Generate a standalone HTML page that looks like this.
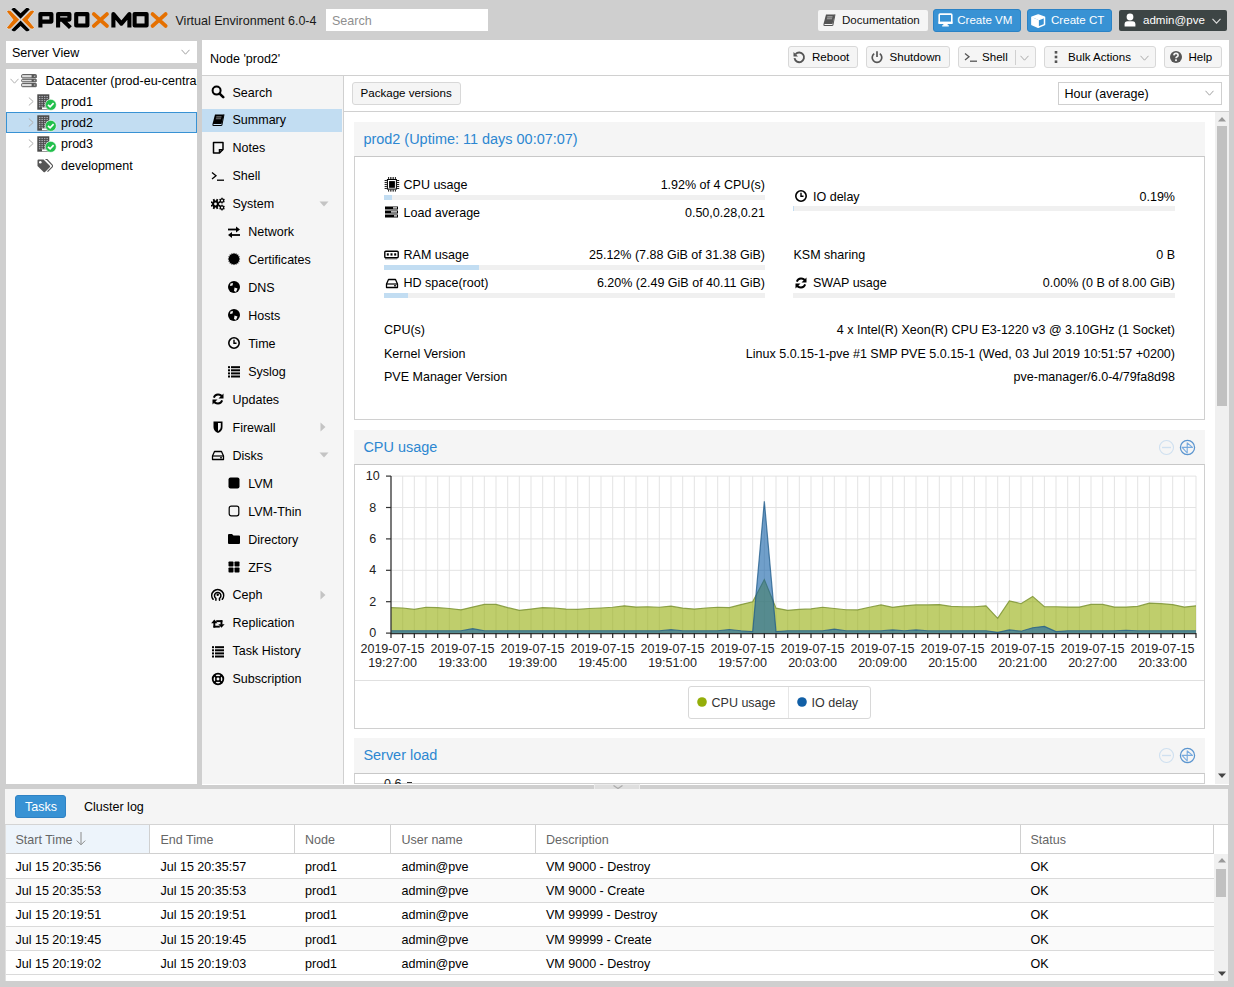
<!DOCTYPE html><html><head><meta charset="utf-8"><title>Proxmox</title><style>
*{box-sizing:border-box;margin:0;padding:0}
html,body{width:1234px;height:987px;overflow:hidden}
body{position:relative;background:#cfcfcf;font-family:"Liberation Sans",sans-serif;font-size:12.53px;color:#000}
.a{position:absolute}
.t{position:absolute;white-space:nowrap;line-height:1}
</style></head><body>
<svg class="a" style="left:0;top:0" width="175" height="40" viewBox="0 0 175 40">
<g stroke-linejoin="round" stroke-width="0.9" stroke="#e8ecef" paint-order="stroke">
<polygon points="6.89,11.53 8.56,10.62 10.53,10.93 19.20,19.74 10.53,28.56 8.56,28.86 6.89,27.80 13.42,19.74" fill="#e57000"/>
<polygon points="34.24,11.53 32.57,10.62 30.60,10.93 21.93,19.74 30.60,28.56 32.57,28.86 34.24,27.80 27.71,19.74" fill="#e57000"/>
<polygon points="11.29,9.26 13.12,7.89 14.94,8.04 20.57,13.21 26.19,8.04 28.01,7.89 29.84,9.26 20.57,18.68" fill="#000"/>
<polygon points="11.29,29.92 13.12,31.29 14.94,31.14 20.57,25.97 26.19,31.14 28.01,31.29 29.84,29.92 20.57,20.50" fill="#000"/>
</g>
<g fill="none" stroke-width="4.1" stroke-linejoin="round">
<path d="M40.4 27.6V14.1H51.4V21.6H40.4" stroke="#000"/>
<path d="M58.1 27.6V14.1H69.4V19.6H58.1M62.6 20L70.4 27.6" stroke="#000"/>
<path d="M76.2 14.1H87.4V25.5H76.2Z" stroke="#000"/>
<path d="M93.9 14.1L106.9 25.9M106.9 14.1L93.9 25.9" stroke="#e57000" stroke-width="3.9" stroke-linecap="round"/>
<path d="M113.4 27.6V14.1L121.4 23.6L129.4 14.1V27.6" stroke="#000"/>
<path d="M134.6 14.1H146.6V25.5H134.6Z" stroke="#000"/>
<path d="M152.6 14.1L165.6 25.9M165.6 14.1L152.6 25.9" stroke="#e57000" stroke-width="3.9" stroke-linecap="round"/>
</g></svg>
<div class="t" style="left:175.5px;top:14.5px;color:#181818">Virtual Environment 6.0-4</div>
<div class="a" style="left:326px;top:9.4px;width:162px;height:21.4px;background:#fff"></div>
<div class="t" style="left:332px;top:15px;color:#8f8f8f">Search</div>
<div class="a" style="left:818px;top:9.6px;width:110px;height:21.3px;background:#f5f5f5;border-radius:2px"></div>
<svg class="a" style="left:822px;top:13px;" width="14" height="14" viewBox="0 0 14 14"><path d="M4 1.5H13L10.5 11H1.5Z" fill="#555"/><path d="M1.5 11Q0.8 13 2.5 13H10.5L11 12H2.8Q2.2 12 2.5 11Z" fill="#555"/><path d="M5.4 3.3H10.6L10.3 4.4H5.1Z" fill="#aaa"/><path d="M5 5.2H10.2L9.9 6.3H4.7Z" fill="#aaa"/><path d="M13 1.5L10.8 12.5" stroke="#555" stroke-width="1"/></svg>
<div class="t" style="left:842px;top:14.5px;color:#111;font-size:11.57px">Documentation</div>
<div class="a" style="left:933px;top:9px;width:88px;height:23px;background:#3892d4;border:1px solid #2b82c5;border-radius:3px"></div>
<svg class="a" style="left:937.5px;top:13px;" width="16" height="14" viewBox="0 0 16 14"><rect x="1.2" y="1.1" width="12.6" height="9.2" rx="0.8" fill="none" stroke="#fff" stroke-width="1.6"/><rect x="0.5" y="8.6" width="14" height="2.4" fill="#fff"/><rect x="5.3" y="10.5" width="4.4" height="2.2" fill="#fff"/><rect x="4.2" y="12.2" width="6.6" height="1.3" fill="#fff"/></svg>
<div class="t" style="left:957.2px;top:14.5px;color:#fff;font-size:11.57px">Create VM</div>
<div class="a" style="left:1027px;top:9px;width:85px;height:23px;background:#3892d4;border:1px solid #2b82c5;border-radius:3px"></div>
<svg class="a" style="left:1030.5px;top:13.5px;" width="15" height="14" viewBox="0 0 15 14"><path d="M7.2 0.9L13.5 3.3V10.6L7.2 13.2L0.9 10.6V3.3Z" fill="none" stroke="#fff" stroke-width="1.5" stroke-linejoin="round"/><path d="M0.9 3.3L7.2 5.8V13.2L0.9 10.6Z" fill="#fff"/><path d="M0.9 3.3L7.2 0.9L13.5 3.3L7.2 5.8Z" fill="#fff"/><path d="M7.2 5.8V13.2M7.2 5.8L13.5 3.3" stroke="#fff" stroke-width="1.3"/></svg>
<div class="t" style="left:1051px;top:14.5px;color:#fff;font-size:11.57px">Create CT</div>
<div class="a" style="left:1119px;top:10px;width:108px;height:21px;background:#3d4545;border-radius:2px"></div>
<svg class="a" style="left:1124px;top:13px;" width="12" height="14" viewBox="0 0 12 14"><circle cx="6" cy="4" r="3.4" fill="#fff"/><path d="M0.6 13.5V11.2Q0.6 8.2 3.5 8.2H8.5Q11.4 8.2 11.4 11.2V13.5Z" fill="#fff"/></svg>
<div class="t" style="left:1143px;top:14.5px;color:#fff;font-size:11.57px">admin@pve</div>
<svg class="a" style="left:1211.5px;top:18px;" width="9" height="6" viewBox="0 0 9 6"><path d="M0.5 0.8L4.5 5.2L8.5 0.8" fill="none" stroke="#ddd" stroke-width="1.1"/></svg>
<div class="a" style="left:6px;top:41px;width:191px;height:22px;background:#fff"></div>
<div class="t" style="left:12px;top:46.5px;">Server View</div>
<svg class="a" style="left:181.0px;top:48.5px;" width="9" height="6" viewBox="0 0 9 6"><path d="M0.5 0.8L4.5 5.2L8.5 0.8" fill="none" stroke="#a0a0a0" stroke-width="1"/></svg>
<div class="a" style="left:6px;top:69px;width:191px;height:715px;background:#fff;overflow:hidden">
<div class="a" style="left:0px;top:43px;width:191px;height:21px;background:#c2ddf2;border:1px solid #3892d4"></div>
</div>
<svg class="a" style="left:10.0px;top:78px;" width="9" height="6" viewBox="0 0 9 6"><path d="M0.5 0.8L4.5 5.2L8.5 0.8" fill="none" stroke="#b0b0b0" stroke-width="1"/></svg>
<svg class="a" style="left:21px;top:74px;" width="16" height="13.5" viewBox="0 0 16 13.5"><rect x="0.6" y="0.6" width="15" height="3.3" rx="1" fill="#ddd" stroke="#555" stroke-width="1"/><rect x="10.6" y="0.6" width="4.2" height="3.3" fill="#555"/><circle cx="13.4" cy="2.25" r="0.7" fill="#bbb"/><rect x="0.6" y="5.3" width="15" height="2.5" rx="1" fill="#ddd" stroke="#555" stroke-width="1"/><rect x="10.6" y="5.3" width="4.2" height="2.5" fill="#555"/><circle cx="13.4" cy="6.55" r="0.7" fill="#bbb"/><rect x="0.6" y="9.4" width="15" height="3.3" rx="1" fill="#ddd" stroke="#555" stroke-width="1"/><rect x="10.6" y="9.4" width="4.2" height="3.3" fill="#555"/><circle cx="13.4" cy="11.05" r="0.7" fill="#bbb"/></svg>
<div class="a" style="left:0;top:0;width:197px;height:100px;overflow:hidden">
<div class="t" style="left:45.6px;top:75px;">Datacenter (prod-eu-central)</div>
</div>
<svg class="a" style="left:27.5px;top:96.7px;" width="6" height="9" viewBox="0 0 6 9"><path d="M0.8 0.5L5.2 4.5L0.8 8.5" fill="none" stroke="#b0b0b0" stroke-width="1"/></svg>
<svg class="a" style="left:37px;top:94px;" width="19.5" height="17" viewBox="0 0 19.5 17"><rect x="0.3" y="0.3" width="12" height="15.4" fill="#4a4a4a"/><rect x="1.9" y="1.9" width="1.5" height="1.2" fill="#a8a8b0"/><rect x="4.4" y="1.9" width="1.5" height="1.2" fill="#a8a8b0"/><rect x="6.9" y="1.9" width="1.5" height="1.2" fill="#a8a8b0"/><rect x="9.4" y="1.9" width="1.5" height="1.2" fill="#a8a8b0"/><rect x="1.9" y="3.9499999999999997" width="1.5" height="1.2" fill="#a8a8b0"/><rect x="4.4" y="3.9499999999999997" width="1.5" height="1.2" fill="#a8a8b0"/><rect x="6.9" y="3.9499999999999997" width="1.5" height="1.2" fill="#a8a8b0"/><rect x="9.4" y="3.9499999999999997" width="1.5" height="1.2" fill="#a8a8b0"/><rect x="1.9" y="6.0" width="1.5" height="1.2" fill="#a8a8b0"/><rect x="4.4" y="6.0" width="1.5" height="1.2" fill="#a8a8b0"/><rect x="6.9" y="6.0" width="1.5" height="1.2" fill="#a8a8b0"/><rect x="9.4" y="6.0" width="1.5" height="1.2" fill="#a8a8b0"/><rect x="1.9" y="8.049999999999999" width="1.5" height="1.2" fill="#a8a8b0"/><rect x="4.4" y="8.049999999999999" width="1.5" height="1.2" fill="#a8a8b0"/><rect x="6.9" y="8.049999999999999" width="1.5" height="1.2" fill="#a8a8b0"/><rect x="9.4" y="8.049999999999999" width="1.5" height="1.2" fill="#a8a8b0"/><rect x="1.9" y="10.1" width="1.5" height="1.2" fill="#a8a8b0"/><rect x="4.4" y="10.1" width="1.5" height="1.2" fill="#a8a8b0"/><rect x="6.9" y="10.1" width="1.5" height="1.2" fill="#a8a8b0"/><rect x="9.4" y="10.1" width="1.5" height="1.2" fill="#a8a8b0"/><rect x="1.9" y="12.15" width="1.5" height="1.2" fill="#a8a8b0"/><rect x="4.4" y="12.15" width="1.5" height="1.2" fill="#a8a8b0"/><rect x="6.9" y="12.15" width="1.5" height="1.2" fill="#a8a8b0"/><rect x="9.4" y="12.15" width="1.5" height="1.2" fill="#a8a8b0"/><rect x="5" y="13.4" width="5" height="1.8" fill="#fff"/><circle cx="13.8" cy="10.8" r="5.5" fill="#21bf4b" stroke="#fff" stroke-width="0.6"/><path d="M11 10.9L13.1 12.9L16.6 9.2" fill="none" stroke="#fff" stroke-width="1.7"/></svg>
<div class="t" style="left:61px;top:96px;">prod1</div>
<svg class="a" style="left:27.5px;top:117.7px;" width="6" height="9" viewBox="0 0 6 9"><path d="M0.8 0.5L5.2 4.5L0.8 8.5" fill="none" stroke="#b0b0b0" stroke-width="1"/></svg>
<svg class="a" style="left:37px;top:115px;" width="19.5" height="17" viewBox="0 0 19.5 17"><rect x="0.3" y="0.3" width="12" height="15.4" fill="#4a4a4a"/><rect x="1.9" y="1.9" width="1.5" height="1.2" fill="#a8a8b0"/><rect x="4.4" y="1.9" width="1.5" height="1.2" fill="#a8a8b0"/><rect x="6.9" y="1.9" width="1.5" height="1.2" fill="#a8a8b0"/><rect x="9.4" y="1.9" width="1.5" height="1.2" fill="#a8a8b0"/><rect x="1.9" y="3.9499999999999997" width="1.5" height="1.2" fill="#a8a8b0"/><rect x="4.4" y="3.9499999999999997" width="1.5" height="1.2" fill="#a8a8b0"/><rect x="6.9" y="3.9499999999999997" width="1.5" height="1.2" fill="#a8a8b0"/><rect x="9.4" y="3.9499999999999997" width="1.5" height="1.2" fill="#a8a8b0"/><rect x="1.9" y="6.0" width="1.5" height="1.2" fill="#a8a8b0"/><rect x="4.4" y="6.0" width="1.5" height="1.2" fill="#a8a8b0"/><rect x="6.9" y="6.0" width="1.5" height="1.2" fill="#a8a8b0"/><rect x="9.4" y="6.0" width="1.5" height="1.2" fill="#a8a8b0"/><rect x="1.9" y="8.049999999999999" width="1.5" height="1.2" fill="#a8a8b0"/><rect x="4.4" y="8.049999999999999" width="1.5" height="1.2" fill="#a8a8b0"/><rect x="6.9" y="8.049999999999999" width="1.5" height="1.2" fill="#a8a8b0"/><rect x="9.4" y="8.049999999999999" width="1.5" height="1.2" fill="#a8a8b0"/><rect x="1.9" y="10.1" width="1.5" height="1.2" fill="#a8a8b0"/><rect x="4.4" y="10.1" width="1.5" height="1.2" fill="#a8a8b0"/><rect x="6.9" y="10.1" width="1.5" height="1.2" fill="#a8a8b0"/><rect x="9.4" y="10.1" width="1.5" height="1.2" fill="#a8a8b0"/><rect x="1.9" y="12.15" width="1.5" height="1.2" fill="#a8a8b0"/><rect x="4.4" y="12.15" width="1.5" height="1.2" fill="#a8a8b0"/><rect x="6.9" y="12.15" width="1.5" height="1.2" fill="#a8a8b0"/><rect x="9.4" y="12.15" width="1.5" height="1.2" fill="#a8a8b0"/><rect x="5" y="13.4" width="5" height="1.8" fill="#fff"/><circle cx="13.8" cy="10.8" r="5.5" fill="#21bf4b" stroke="#fff" stroke-width="0.6"/><path d="M11 10.9L13.1 12.9L16.6 9.2" fill="none" stroke="#fff" stroke-width="1.7"/></svg>
<div class="t" style="left:61px;top:117px;">prod2</div>
<svg class="a" style="left:27.5px;top:138.7px;" width="6" height="9" viewBox="0 0 6 9"><path d="M0.8 0.5L5.2 4.5L0.8 8.5" fill="none" stroke="#b0b0b0" stroke-width="1"/></svg>
<svg class="a" style="left:37px;top:136px;" width="19.5" height="17" viewBox="0 0 19.5 17"><rect x="0.3" y="0.3" width="12" height="15.4" fill="#4a4a4a"/><rect x="1.9" y="1.9" width="1.5" height="1.2" fill="#a8a8b0"/><rect x="4.4" y="1.9" width="1.5" height="1.2" fill="#a8a8b0"/><rect x="6.9" y="1.9" width="1.5" height="1.2" fill="#a8a8b0"/><rect x="9.4" y="1.9" width="1.5" height="1.2" fill="#a8a8b0"/><rect x="1.9" y="3.9499999999999997" width="1.5" height="1.2" fill="#a8a8b0"/><rect x="4.4" y="3.9499999999999997" width="1.5" height="1.2" fill="#a8a8b0"/><rect x="6.9" y="3.9499999999999997" width="1.5" height="1.2" fill="#a8a8b0"/><rect x="9.4" y="3.9499999999999997" width="1.5" height="1.2" fill="#a8a8b0"/><rect x="1.9" y="6.0" width="1.5" height="1.2" fill="#a8a8b0"/><rect x="4.4" y="6.0" width="1.5" height="1.2" fill="#a8a8b0"/><rect x="6.9" y="6.0" width="1.5" height="1.2" fill="#a8a8b0"/><rect x="9.4" y="6.0" width="1.5" height="1.2" fill="#a8a8b0"/><rect x="1.9" y="8.049999999999999" width="1.5" height="1.2" fill="#a8a8b0"/><rect x="4.4" y="8.049999999999999" width="1.5" height="1.2" fill="#a8a8b0"/><rect x="6.9" y="8.049999999999999" width="1.5" height="1.2" fill="#a8a8b0"/><rect x="9.4" y="8.049999999999999" width="1.5" height="1.2" fill="#a8a8b0"/><rect x="1.9" y="10.1" width="1.5" height="1.2" fill="#a8a8b0"/><rect x="4.4" y="10.1" width="1.5" height="1.2" fill="#a8a8b0"/><rect x="6.9" y="10.1" width="1.5" height="1.2" fill="#a8a8b0"/><rect x="9.4" y="10.1" width="1.5" height="1.2" fill="#a8a8b0"/><rect x="1.9" y="12.15" width="1.5" height="1.2" fill="#a8a8b0"/><rect x="4.4" y="12.15" width="1.5" height="1.2" fill="#a8a8b0"/><rect x="6.9" y="12.15" width="1.5" height="1.2" fill="#a8a8b0"/><rect x="9.4" y="12.15" width="1.5" height="1.2" fill="#a8a8b0"/><rect x="5" y="13.4" width="5" height="1.8" fill="#fff"/><circle cx="13.8" cy="10.8" r="5.5" fill="#21bf4b" stroke="#fff" stroke-width="0.6"/><path d="M11 10.9L13.1 12.9L16.6 9.2" fill="none" stroke="#fff" stroke-width="1.7"/></svg>
<div class="t" style="left:61px;top:138px;">prod3</div>
<svg class="a" style="left:37px;top:159px;" width="16" height="14" viewBox="0 0 16 14"><path d="M0.5 1.5Q0.5 0.5 1.5 0.5H6.5L12.8 6.8Q13.5 7.5 12.8 8.2L8 13Q7.3 13.7 6.6 13L0.5 6.9Z" fill="#555"/><circle cx="3.3" cy="3.3" r="1.3" fill="#fff"/><path d="M8.5 0.5H10L15.5 6.3Q16.2 7 15.5 7.7L10.5 12.7" fill="none" stroke="#555" stroke-width="1.2"/></svg>
<div class="t" style="left:61px;top:160px;">development</div>
<div class="a" style="left:202px;top:40px;width:1027px;height:745px;background:#fff"></div>
<div class="t" style="left:210px;top:52.5px;">Node 'prod2'</div>
<div class="a" style="left:202px;top:75px;width:1027px;height:1px;background:#d0d0d0"></div>
<div class="a" style="left:788px;top:46px;width:70px;height:22px;background:#f5f5f5;border:1px solid #d8d8d8;border-radius:3px"></div>
<svg class="a" style="left:792px;top:49.8px;" width="14" height="14" viewBox="0 0 14 14"><path d="M3.6 4.2A4.8 4.8 0 1 1 2.5 8.2" fill="none" stroke="#555" stroke-width="1.9"/><path d="M1.5 2V6.5H6Z" fill="#555"/></svg>
<div class="t" style="left:812px;top:52px;font-size:11.57px">Reboot</div>
<div class="a" style="left:866px;top:46px;width:84px;height:22px;background:#f5f5f5;border:1px solid #d8d8d8;border-radius:3px"></div>
<svg class="a" style="left:870px;top:49.8px;" width="14" height="14" viewBox="0 0 14 14"><path d="M4.2 3.6A4.8 4.8 0 1 0 9.8 3.6" fill="none" stroke="#555" stroke-width="1.7"/><path d="M7 1.2V7" stroke="#555" stroke-width="1.7"/></svg>
<div class="t" style="left:889.5px;top:52px;font-size:11.57px">Shutdown</div>
<div class="a" style="left:958px;top:46px;width:78px;height:22px;background:#f5f5f5;border:1px solid #d8d8d8;border-radius:3px"></div>
<svg class="a" style="left:964px;top:49.8px;" width="14" height="14" viewBox="0 0 14 14"><path d="M1 3.5L5 6.8L1 10" fill="none" stroke="#555" stroke-width="1.3"/><path d="M6 11.2H13" stroke="#555" stroke-width="1.3"/></svg>
<div class="t" style="left:982px;top:52px;font-size:11.57px">Shell</div>
<div class="a" style="left:1014.5px;top:50px;width:1px;height:15px;background:#d0d0d0"></div>
<svg class="a" style="left:1020.0px;top:55px;" width="9" height="6" viewBox="0 0 9 6"><path d="M0.5 0.8L4.5 5.2L8.5 0.8" fill="none" stroke="#aaa" stroke-width="1"/></svg>
<div class="a" style="left:1044px;top:46px;width:112px;height:22px;background:#f5f5f5;border:1px solid #d8d8d8;border-radius:3px"></div>
<svg class="a" style="left:1048.5px;top:49.8px;" width="14" height="14" viewBox="0 0 14 14"><rect x="5.7" y="1" width="2.6" height="2.6" fill="#555"/><rect x="5.7" y="5.7" width="2.6" height="2.6" fill="#555"/><rect x="5.7" y="10.4" width="2.6" height="2.6" fill="#555"/></svg>
<div class="t" style="left:1068px;top:52px;font-size:11.57px">Bulk Actions</div>
<svg class="a" style="left:1139.5px;top:55px;" width="9" height="6" viewBox="0 0 9 6"><path d="M0.5 0.8L4.5 5.2L8.5 0.8" fill="none" stroke="#aaa" stroke-width="1"/></svg>
<div class="a" style="left:1164px;top:46px;width:58px;height:22px;background:#f5f5f5;border:1px solid #d8d8d8;border-radius:3px"></div>
<svg class="a" style="left:1169px;top:49.8px;" width="14" height="14" viewBox="0 0 14 14"><circle cx="7" cy="7" r="6" fill="#555"/><path d="M4.9 5.4Q5 3.4 7 3.4Q9.1 3.4 9.1 5.2Q9.1 6.3 7.8 6.9Q7 7.3 7 8.3" fill="none" stroke="#f5f5f5" stroke-width="1.6"/><rect x="6.1" y="9.3" width="1.8" height="1.8" fill="#f5f5f5"/></svg>
<div class="t" style="left:1188.5px;top:52px;font-size:11.57px">Help</div>
<div class="a" style="left:202px;top:76px;width:142px;height:708px;background:#f5f5f5;border-right:1px solid #d0d0d0"></div>
<div class="a" style="left:202px;top:109px;width:140px;height:23px;background:#c2ddf2"></div>
<div class="t" style="left:232.5px;top:86.5px;">Search</div>
<svg class="a" style="left:211px;top:84.8px;" width="14" height="14" viewBox="0 0 14 14"><circle cx="5.6" cy="5.6" r="4" fill="none" stroke="#000" stroke-width="2"/><path d="M8.6 8.6L12.2 12.2" stroke="#000" stroke-width="2.6" stroke-linecap="round"/></svg>
<div class="t" style="left:232.5px;top:114.4px;">Summary</div>
<svg class="a" style="left:211px;top:112.74px;" width="14" height="14" viewBox="0 0 14 14"><path d="M4 1.5H13L10.5 11H1.5Z" fill="#000"/><path d="M1.5 11Q0.8 13 2.5 13H10.5L11 12H2.8Q2.2 12 2.5 11Z" fill="#000"/><path d="M5.4 3.3H10.6L10.3 4.4H5.1Z" fill="#777"/><path d="M5 5.2H10.2L9.9 6.3H4.7Z" fill="#777"/><path d="M13 1.5L10.8 12.5" stroke="#000" stroke-width="1"/></svg>
<div class="t" style="left:232.5px;top:142.4px;">Notes</div>
<svg class="a" style="left:211px;top:140.7px;" width="14" height="14" viewBox="0 0 14 14"><path d="M2.5 1.5H12V8.5L8.5 12H2.5Z" fill="none" stroke="#000" stroke-width="1.5" stroke-linejoin="round"/><path d="M8.5 12V8.8H12" fill="none" stroke="#000" stroke-width="1.5"/></svg>
<div class="t" style="left:232.5px;top:170.3px;">Shell</div>
<svg class="a" style="left:211px;top:168.6px;" width="14" height="14" viewBox="0 0 14 14"><path d="M1 3.5L5 6.8L1 10" fill="none" stroke="#000" stroke-width="1.3"/><path d="M6 11.2H13" stroke="#000" stroke-width="1.3"/></svg>
<div class="t" style="left:232.5px;top:198.3px;">System</div>
<svg class="a" style="left:211px;top:196.6px;" width="14" height="14" viewBox="0 0 14 14"><rect x="3.6" y="1.8" width="1.8" height="2" transform="rotate(22.5 4.5 7)" fill="#000"/><rect x="3.6" y="1.8" width="1.8" height="2" transform="rotate(67.5 4.5 7)" fill="#000"/><rect x="3.6" y="1.8" width="1.8" height="2" transform="rotate(112.5 4.5 7)" fill="#000"/><rect x="3.6" y="1.8" width="1.8" height="2" transform="rotate(157.5 4.5 7)" fill="#000"/><rect x="3.6" y="1.8" width="1.8" height="2" transform="rotate(202.5 4.5 7)" fill="#000"/><rect x="3.6" y="1.8" width="1.8" height="2" transform="rotate(247.5 4.5 7)" fill="#000"/><rect x="3.6" y="1.8" width="1.8" height="2" transform="rotate(292.5 4.5 7)" fill="#000"/><rect x="3.6" y="1.8" width="1.8" height="2" transform="rotate(337.5 4.5 7)" fill="#000"/><circle cx="4.5" cy="7" r="3.5" fill="#000"/><circle cx="4.5" cy="7" r="1.4" fill="#f5f5f5"/><rect x="10.4" y="0.7000000000000002" width="1.2" height="1.2" transform="rotate(0 11 3.6)" fill="#000"/><rect x="10.4" y="0.7000000000000002" width="1.2" height="1.2" transform="rotate(60 11 3.6)" fill="#000"/><rect x="10.4" y="0.7000000000000002" width="1.2" height="1.2" transform="rotate(120 11 3.6)" fill="#000"/><rect x="10.4" y="0.7000000000000002" width="1.2" height="1.2" transform="rotate(180 11 3.6)" fill="#000"/><rect x="10.4" y="0.7000000000000002" width="1.2" height="1.2" transform="rotate(240 11 3.6)" fill="#000"/><rect x="10.4" y="0.7000000000000002" width="1.2" height="1.2" transform="rotate(300 11 3.6)" fill="#000"/><circle cx="11" cy="3.6" r="1.7" fill="none" stroke="#000" stroke-width="1.3"/><rect x="10.4" y="7.699999999999999" width="1.2" height="1.2" transform="rotate(0 11 10.6)" fill="#000"/><rect x="10.4" y="7.699999999999999" width="1.2" height="1.2" transform="rotate(60 11 10.6)" fill="#000"/><rect x="10.4" y="7.699999999999999" width="1.2" height="1.2" transform="rotate(120 11 10.6)" fill="#000"/><rect x="10.4" y="7.699999999999999" width="1.2" height="1.2" transform="rotate(180 11 10.6)" fill="#000"/><rect x="10.4" y="7.699999999999999" width="1.2" height="1.2" transform="rotate(240 11 10.6)" fill="#000"/><rect x="10.4" y="7.699999999999999" width="1.2" height="1.2" transform="rotate(300 11 10.6)" fill="#000"/><circle cx="11" cy="10.6" r="1.7" fill="none" stroke="#000" stroke-width="1.3"/></svg>
<div class="t" style="left:248.2px;top:226.2px;">Network</div>
<svg class="a" style="left:227px;top:224.5px;" width="14" height="14" viewBox="0 0 14 14"><path d="M1 4.5H10" stroke="#000" stroke-width="1.8"/><path d="M9 1.5L13 4.5L9 7.5Z" fill="#000"/><path d="M4 10H13" stroke="#000" stroke-width="1.8"/><path d="M5 7L1 10L5 13Z" fill="#000"/></svg>
<div class="t" style="left:248.2px;top:254.1px;">Certificates</div>
<svg class="a" style="left:227px;top:252.39999999999998px;" width="14" height="14" viewBox="0 0 14 14"><polygon points="13.30,7.00 11.90,7.98 12.82,9.41 11.16,9.78 11.45,11.45 9.78,11.16 9.41,12.82 7.98,11.90 7.00,13.30 6.02,11.90 4.59,12.82 4.22,11.16 2.55,11.45 2.84,9.78 1.18,9.41 2.10,7.98 0.70,7.00 2.10,6.02 1.18,4.59 2.84,4.22 2.55,2.55 4.22,2.84 4.59,1.18 6.02,2.10 7.00,0.70 7.98,2.10 9.41,1.18 9.78,2.84 11.45,2.55 11.16,4.22 12.82,4.59 11.90,6.02" fill="#000"/></svg>
<div class="t" style="left:248.2px;top:282.1px;">DNS</div>
<svg class="a" style="left:227px;top:280.4px;" width="14" height="14" viewBox="0 0 14 14"><circle cx="7" cy="7" r="6" fill="#000"/><path d="M7.5 7.5L10.5 8.5L9 12L7 11Z" fill="#f5f5f5"/><path d="M3.5 3.5L6 3L5.5 5.5L3 6Z" fill="#f5f5f5"/></svg>
<div class="t" style="left:248.2px;top:310.0px;">Hosts</div>
<svg class="a" style="left:227px;top:308.3px;" width="14" height="14" viewBox="0 0 14 14"><circle cx="7" cy="7" r="6" fill="#000"/><path d="M7.5 7.5L10.5 8.5L9 12L7 11Z" fill="#f5f5f5"/><path d="M3.5 3.5L6 3L5.5 5.5L3 6Z" fill="#f5f5f5"/></svg>
<div class="t" style="left:248.2px;top:338.0px;">Time</div>
<svg class="a" style="left:227px;top:336.3px;" width="14" height="14" viewBox="0 0 14 14"><circle cx="7" cy="7" r="5.2" fill="none" stroke="#000" stroke-width="1.6"/><path d="M7 3.8V7.2H9.5" fill="none" stroke="#000" stroke-width="1.4"/></svg>
<div class="t" style="left:248.2px;top:365.9px;">Syslog</div>
<svg class="a" style="left:227px;top:364.2px;" width="14" height="14" viewBox="0 0 14 14"><rect x="1" y="2.2" width="2" height="2" fill="#000"/><rect x="4" y="2.2" width="9" height="2" fill="#000"/><rect x="1" y="5.300000000000001" width="2" height="2" fill="#000"/><rect x="4" y="5.300000000000001" width="9" height="2" fill="#000"/><rect x="1" y="8.4" width="2" height="2" fill="#000"/><rect x="4" y="8.4" width="9" height="2" fill="#000"/><rect x="1" y="11.5" width="2" height="2" fill="#000"/><rect x="4" y="11.5" width="9" height="2" fill="#000"/></svg>
<div class="t" style="left:232.5px;top:393.8px;">Updates</div>
<svg class="a" style="left:211px;top:392.1px;" width="14" height="14" viewBox="0 0 14 14"><path d="M11.3 5.2A4.6 4.6 0 0 0 2.8 5.6" fill="none" stroke="#000" stroke-width="1.9"/><path d="M12.5 1.5V6.5H7.5Z" fill="#000"/><path d="M2.7 8.8A4.6 4.6 0 0 0 11.2 8.4" fill="none" stroke="#000" stroke-width="1.9"/><path d="M1.5 12.5V7.5H6.5Z" fill="#000"/></svg>
<div class="t" style="left:232.5px;top:421.8px;">Firewall</div>
<svg class="a" style="left:211px;top:420.1px;" width="14" height="14" viewBox="0 0 14 14"><path d="M2.5 1.5H11.5V7Q11.5 11 7 13Q2.5 11 2.5 7Z" fill="#000"/><path d="M7 3V11.2Q9.8 9.8 9.8 7V3Z" fill="#f5f5f5"/></svg>
<div class="t" style="left:232.5px;top:449.7px;">Disks</div>
<svg class="a" style="left:211px;top:448.0px;" width="14" height="14" viewBox="0 0 14 14"><path d="M1.5 8L3.5 3.5H10.5L12.5 8V11.5H1.5Z" fill="none" stroke="#000" stroke-width="1.3" stroke-linejoin="round"/><path d="M1.5 8H12.5" stroke="#000" stroke-width="1.2"/><rect x="9" y="9.2" width="2" height="1.2" fill="#000"/></svg>
<div class="t" style="left:248.2px;top:477.7px;">LVM</div>
<svg class="a" style="left:227px;top:476.0px;" width="14" height="14" viewBox="0 0 14 14"><rect x="1.5" y="1.5" width="11" height="11" rx="2" fill="#000"/></svg>
<div class="t" style="left:248.2px;top:505.6px;">LVM-Thin</div>
<svg class="a" style="left:227px;top:503.9px;" width="14" height="14" viewBox="0 0 14 14"><rect x="2.2" y="2.2" width="9.6" height="9.6" rx="2" fill="none" stroke="#000" stroke-width="1.2"/></svg>
<div class="t" style="left:248.2px;top:533.5px;">Directory</div>
<svg class="a" style="left:227px;top:531.8px;" width="14" height="14" viewBox="0 0 14 14"><path d="M1 3Q1 2 2 2H5L6.5 3.5H12Q13 3.5 13 4.5V11Q13 12 12 12H2Q1 12 1 11Z" fill="#000"/></svg>
<div class="t" style="left:248.2px;top:561.5px;">ZFS</div>
<svg class="a" style="left:227px;top:559.8px;" width="14" height="14" viewBox="0 0 14 14"><rect x="1.5" y="1.5" width="5" height="5" rx="0.8" fill="#000"/><rect x="7.5" y="1.5" width="5" height="5" rx="0.8" fill="#000"/><rect x="1.5" y="7.5" width="5" height="5" rx="0.8" fill="#000"/><rect x="7.5" y="7.5" width="5" height="5" rx="0.8" fill="#000"/></svg>
<div class="t" style="left:232.5px;top:589.4px;">Ceph</div>
<svg class="a" style="left:211px;top:587.7px;" width="14" height="14" viewBox="0 0 14 14"><path d="M2.1 11.2A5.9 5.9 0 1 1 11.3 11.2" fill="none" stroke="#000" stroke-width="1.6" stroke-linecap="round"/><path d="M4.9 12.2V10.3A3.2 3.2 0 1 1 8.5 10.3V12.2" fill="none" stroke="#000" stroke-width="1.5" stroke-linecap="round"/><circle cx="6.7" cy="6.8" r="1.2" fill="#000"/></svg>
<div class="t" style="left:232.5px;top:617.4px;">Replication</div>
<svg class="a" style="left:211px;top:615.7px;" width="14" height="14" viewBox="0 0 14 14"><rect x="2.4" y="6.5" width="1.9" height="5.1" fill="#000"/><rect x="2.4" y="9.7" width="6.4" height="1.9" fill="#000"/><rect x="5.2" y="4.2" width="6.2" height="1.9" fill="#000"/><rect x="9.5" y="4.2" width="1.9" height="4.6" fill="#000"/><path d="M0.2 7.2L3.35 3.6L6.5 7.2Z" fill="#000"/><path d="M7.3 8.2L10.45 11.8L13.6 8.2Z" fill="#000"/></svg>
<div class="t" style="left:232.5px;top:645.3px;">Task History</div>
<svg class="a" style="left:211px;top:643.6px;" width="14" height="14" viewBox="0 0 14 14"><rect x="1" y="2.2" width="2" height="2" fill="#000"/><rect x="4" y="2.2" width="9" height="2" fill="#000"/><rect x="1" y="5.300000000000001" width="2" height="2" fill="#000"/><rect x="4" y="5.300000000000001" width="9" height="2" fill="#000"/><rect x="1" y="8.4" width="2" height="2" fill="#000"/><rect x="4" y="8.4" width="9" height="2" fill="#000"/><rect x="1" y="11.5" width="2" height="2" fill="#000"/><rect x="4" y="11.5" width="9" height="2" fill="#000"/></svg>
<div class="t" style="left:232.5px;top:673.2px;">Subscription</div>
<svg class="a" style="left:211px;top:671.5px;" width="14" height="14" viewBox="0 0 14 14"><circle cx="7" cy="7" r="5.3" fill="none" stroke="#000" stroke-width="1.8"/><circle cx="7" cy="7" r="2.2" fill="none" stroke="#000" stroke-width="1.5"/><path d="M3.2 3.2L5.4 5.4M10.8 3.2L8.6 5.4M3.2 10.8L5.4 8.6M10.8 10.8L8.6 8.6" stroke="#000" stroke-width="2"/></svg>
<svg class="a" style="left:319px;top:200.56px;" width="10" height="6" viewBox="0 0 10 6"><path d="M0.5 0.5H9.5L5 5.5Z" fill="#c4c4c4"/></svg>
<svg class="a" style="left:320px;top:422.08000000000004px;" width="6" height="10" viewBox="0 0 6 10"><path d="M0.5 0.5V9.5L5.5 5Z" fill="#c4c4c4"/></svg>
<svg class="a" style="left:319px;top:452.02000000000004px;" width="10" height="6" viewBox="0 0 10 6"><path d="M0.5 0.5H9.5L5 5.5Z" fill="#c4c4c4"/></svg>
<svg class="a" style="left:320px;top:589.72px;" width="6" height="10" viewBox="0 0 6 10"><path d="M0.5 0.5V9.5L5.5 5Z" fill="#c4c4c4"/></svg>
<div class="a" style="left:352px;top:82px;width:109px;height:23px;background:#f5f5f5;border:1px solid #d8d8d8;border-radius:3px"></div>
<div class="t" style="left:360.5px;top:87.6px;font-size:11.57px">Package versions</div>
<div class="a" style="left:1058px;top:82px;width:164px;height:23px;background:#fff;border:1px solid #cfcfcf"></div>
<div class="t" style="left:1064.5px;top:88px;">Hour (average)</div>
<svg class="a" style="left:1205.3px;top:90px;" width="9" height="6" viewBox="0 0 9 6"><path d="M0.5 0.8L4.5 5.2L8.5 0.8" fill="none" stroke="#a0a0a0" stroke-width="1"/></svg>
<div class="a" style="left:344px;top:111px;width:885px;height:1px;background:#d0d0d0"></div>
<div class="a" style="left:354px;top:122px;width:851px;height:34px;background:#f5f5f5"></div>
<div class="t" style="left:363.4px;top:132px;font-size:14.46px;color:#2c87d1">prod2 (Uptime: 11 days 00:07:07)</div>
<div class="a" style="left:354px;top:156px;width:851px;height:264px;border:1px solid #d0d0d0;border-top:1px solid #c8c8c8;background:#fff"></div>
<div class="a" style="left:354px;top:430px;width:851px;height:34px;background:#f5f5f5"></div>
<div class="t" style="left:363.4px;top:440px;font-size:14.46px;color:#2c87d1">CPU usage</div>
<div class="a" style="left:354px;top:464px;width:851px;height:265px;border:1px solid #d0d0d0;border-top:1px solid #c8c8c8;background:#fff"></div>
<svg class="a" style="left:1158px;top:438.5px;" width="17" height="17" viewBox="0 0 17 17"><circle cx="8.5" cy="8.5" r="7" fill="none" stroke="#cfe0f0" stroke-width="1.1"/><path d="M4 8.5H13" stroke="#cfe0f0" stroke-width="1.4"/></svg>
<svg class="a" style="left:1179.3px;top:438.5px;" width="17" height="17" viewBox="0 0 17 17"><circle cx="8.5" cy="8.5" r="7.1" fill="none" stroke="#5b95cf" stroke-width="1.25"/><path d="M8.2 3.8L13.5 8.4H3.1L8.2 14Z" fill="none" stroke="#78abdf" stroke-width="1.1" stroke-linejoin="round"/></svg>
<div class="a" style="left:354px;top:738px;width:851px;height:35px;background:#f5f5f5"></div>
<div class="t" style="left:363.4px;top:748px;font-size:14.46px;color:#2c87d1">Server load</div>
<div class="a" style="left:354px;top:773px;width:851px;height:11px;border:1px solid #d0d0d0;border-top:1px solid #c8c8c8;background:#fff"></div>
<svg class="a" style="left:1158px;top:746.5px;" width="17" height="17" viewBox="0 0 17 17"><circle cx="8.5" cy="8.5" r="7" fill="none" stroke="#cfe0f0" stroke-width="1.1"/><path d="M4 8.5H13" stroke="#cfe0f0" stroke-width="1.4"/></svg>
<svg class="a" style="left:1179.3px;top:746.5px;" width="17" height="17" viewBox="0 0 17 17"><circle cx="8.5" cy="8.5" r="7.1" fill="none" stroke="#5b95cf" stroke-width="1.25"/><path d="M8.2 3.8L13.5 8.4H3.1L8.2 14Z" fill="none" stroke="#78abdf" stroke-width="1.1" stroke-linejoin="round"/></svg>
<svg class="a" style="left:384px;top:176px;" width="16" height="16" viewBox="0 0 16 16"><rect x="2.9" y="3" width="10" height="10.6" fill="#000"/><rect x="3.9" y="4" width="8" height="8.6" fill="#fff"/><rect x="5.1" y="5.1" width="5.8" height="6.7" fill="#000"/><rect x="0.6" y="4.05" width="2.3" height="0.9" fill="#000"/><rect x="12.9" y="4.05" width="2.3" height="0.9" fill="#000"/><rect x="0.6" y="5.95" width="2.3" height="0.9" fill="#000"/><rect x="12.9" y="5.95" width="2.3" height="0.9" fill="#000"/><rect x="0.6" y="7.95" width="2.3" height="0.9" fill="#000"/><rect x="12.9" y="7.95" width="2.3" height="0.9" fill="#000"/><rect x="0.6" y="9.950000000000001" width="2.3" height="0.9" fill="#000"/><rect x="12.9" y="9.950000000000001" width="2.3" height="0.9" fill="#000"/><rect x="0.6" y="11.950000000000001" width="2.3" height="0.9" fill="#000"/><rect x="12.9" y="11.950000000000001" width="2.3" height="0.9" fill="#000"/><rect x="4.199999999999999" y="1" width="0.8" height="2" fill="#000"/><rect x="4.199999999999999" y="13.6" width="0.8" height="2" fill="#000"/><rect x="5.8999999999999995" y="1" width="0.8" height="2" fill="#000"/><rect x="5.8999999999999995" y="13.6" width="0.8" height="2" fill="#000"/><rect x="7.6" y="1" width="0.8" height="2" fill="#000"/><rect x="7.6" y="13.6" width="0.8" height="2" fill="#000"/><rect x="9.299999999999999" y="1" width="0.8" height="2" fill="#000"/><rect x="9.299999999999999" y="13.6" width="0.8" height="2" fill="#000"/><rect x="11.0" y="1" width="0.8" height="2" fill="#000"/><rect x="11.0" y="13.6" width="0.8" height="2" fill="#000"/></svg>
<div class="t" style="left:403.5px;top:178.5px;">CPU usage</div>
<div class="t" style="right:469px;top:178.5px;">1.92% of 4 CPU(s)</div>
<div class="a" style="left:384px;top:195px;width:381px;height:5px;background:#f0f0f0"></div>
<div class="a" style="left:384px;top:195px;width:7.5px;height:5px;background:#c2ddf2"></div>
<svg class="a" style="left:385px;top:206px;" width="14" height="12" viewBox="0 0 14 12"><rect x="0" y="0.5" width="13" height="3" fill="#000"/><rect x="0" y="4.5" width="13" height="3" fill="#000"/><rect x="0" y="8.5" width="13" height="3" fill="#000"/><rect x="8" y="1.3" width="4" height="1.2" fill="#fff"/><rect x="6" y="5.3" width="6" height="1.2" fill="#fff"/><rect x="9" y="9.3" width="3" height="1.2" fill="#fff"/></svg>
<div class="t" style="left:403.5px;top:206.5px;">Load average</div>
<div class="t" style="right:469px;top:206.5px;">0.50,0.28,0.21</div>
<svg class="a" style="left:384px;top:249px;" width="15" height="12" viewBox="0 0 15 12"><rect x="0.8" y="2.3" width="13.4" height="6.5" rx="1" fill="none" stroke="#000" stroke-width="1.4"/><rect x="2.8" y="4.3" width="2" height="2.3" fill="#000"/><rect x="6.5" y="4.3" width="2" height="2.3" fill="#000"/><rect x="10.2" y="4.3" width="2" height="2.3" fill="#000"/><path d="M2 9.5V10.5M4 9.5V10.5M6 9.5V10.5M8 9.5V10.5M10 9.5V10.5M12 9.5V10.5" stroke="#000" stroke-width="0.8"/></svg>
<div class="t" style="left:403.5px;top:249px;">RAM usage</div>
<div class="t" style="right:469px;top:249px;">25.12% (7.88 GiB of 31.38 GiB)</div>
<div class="a" style="left:384px;top:265px;width:381px;height:5px;background:#f0f0f0"></div>
<div class="a" style="left:384px;top:265px;width:95px;height:5px;background:#c2ddf2"></div>
<svg class="a" style="left:385px;top:276px;" width="14" height="14" viewBox="0 0 14 14"><path d="M1.5 8L3.5 3.5H10.5L12.5 8V11.5H1.5Z" fill="none" stroke="#000" stroke-width="1.3" stroke-linejoin="round"/><path d="M1.5 8H12.5" stroke="#000" stroke-width="1.2"/><rect x="9" y="9.2" width="2" height="1.2" fill="#000"/></svg>
<div class="t" style="left:403.5px;top:277px;">HD space(root)</div>
<div class="t" style="right:469px;top:277px;">6.20% (2.49 GiB of 40.11 GiB)</div>
<div class="a" style="left:384px;top:293px;width:381px;height:5px;background:#f0f0f0"></div>
<div class="a" style="left:384px;top:293px;width:24px;height:5px;background:#c2ddf2"></div>
<svg class="a" style="left:794px;top:189px;" width="14" height="14" viewBox="0 0 14 14"><circle cx="7" cy="7" r="5.2" fill="none" stroke="#000" stroke-width="1.6"/><path d="M7 3.8V7.2H9.5" fill="none" stroke="#000" stroke-width="1.4"/></svg>
<div class="t" style="left:813px;top:190.5px;">IO delay</div>
<div class="t" style="right:59px;top:190.5px;">0.19%</div>
<div class="a" style="left:793px;top:206px;width:382px;height:5px;background:#f0f0f0"></div>
<div class="a" style="left:793px;top:206px;width:1px;height:5px;background:#c2ddf2"></div>
<div class="t" style="left:793.5px;top:249px;">KSM sharing</div>
<div class="t" style="right:59px;top:249px;">0 B</div>
<svg class="a" style="left:794px;top:276px;" width="14" height="14" viewBox="0 0 14 14"><path d="M11.3 5.2A4.6 4.6 0 0 0 2.8 5.6" fill="none" stroke="#000" stroke-width="1.9"/><path d="M12.5 1.5V6.5H7.5Z" fill="#000"/><path d="M2.7 8.8A4.6 4.6 0 0 0 11.2 8.4" fill="none" stroke="#000" stroke-width="1.9"/><path d="M1.5 12.5V7.5H6.5Z" fill="#000"/></svg>
<div class="t" style="left:813px;top:277px;">SWAP usage</div>
<div class="t" style="right:59px;top:277px;">0.00% (0 B of 8.00 GiB)</div>
<div class="a" style="left:793px;top:293px;width:382px;height:5px;background:#f0f0f0"></div>
<div class="t" style="left:384px;top:324px;">CPU(s)</div>
<div class="t" style="right:59px;top:324px;">4 x Intel(R) Xeon(R) CPU E3-1220 v3 @ 3.10GHz (1 Socket)</div>
<div class="t" style="left:384px;top:347.5px;">Kernel Version</div>
<div class="t" style="right:59px;top:347.5px;">Linux 5.0.15-1-pve #1 SMP PVE 5.0.15-1 (Wed, 03 Jul 2019 10:51:57 +0200)</div>
<div class="t" style="left:384px;top:370.5px;">PVE Manager Version</div>
<div class="t" style="right:59px;top:370.5px;">pve-manager/6.0-4/79fa8d98</div>
<svg class="a" style="left:0;top:0" width="1234" height="987"><path d="M391.0 633.1H1196" stroke="#e3e3e3" stroke-width="1"/><path d="M391.0 601.7H1196" stroke="#e3e3e3" stroke-width="1"/><path d="M391.0 570.3H1196" stroke="#e3e3e3" stroke-width="1"/><path d="M391.0 538.9H1196" stroke="#e3e3e3" stroke-width="1"/><path d="M391.0 507.5H1196" stroke="#e3e3e3" stroke-width="1"/><path d="M391.0 476.1H1196" stroke="#e3e3e3" stroke-width="1"/><path d="M402.7 476V633.1" stroke="#e3e3e3" stroke-width="1"/><path d="M414.3 476V633.1" stroke="#e3e3e3" stroke-width="1"/><path d="M426.0 476V633.1" stroke="#e3e3e3" stroke-width="1"/><path d="M437.7 476V633.1" stroke="#e3e3e3" stroke-width="1"/><path d="M449.3 476V633.1" stroke="#e3e3e3" stroke-width="1"/><path d="M461.0 476V633.1" stroke="#e3e3e3" stroke-width="1"/><path d="M472.7 476V633.1" stroke="#e3e3e3" stroke-width="1"/><path d="M484.3 476V633.1" stroke="#e3e3e3" stroke-width="1"/><path d="M496.0 476V633.1" stroke="#e3e3e3" stroke-width="1"/><path d="M507.7 476V633.1" stroke="#e3e3e3" stroke-width="1"/><path d="M519.3 476V633.1" stroke="#e3e3e3" stroke-width="1"/><path d="M531.0 476V633.1" stroke="#e3e3e3" stroke-width="1"/><path d="M542.7 476V633.1" stroke="#e3e3e3" stroke-width="1"/><path d="M554.3 476V633.1" stroke="#e3e3e3" stroke-width="1"/><path d="M566.0 476V633.1" stroke="#e3e3e3" stroke-width="1"/><path d="M577.7 476V633.1" stroke="#e3e3e3" stroke-width="1"/><path d="M589.3 476V633.1" stroke="#e3e3e3" stroke-width="1"/><path d="M601.0 476V633.1" stroke="#e3e3e3" stroke-width="1"/><path d="M612.7 476V633.1" stroke="#e3e3e3" stroke-width="1"/><path d="M624.3 476V633.1" stroke="#e3e3e3" stroke-width="1"/><path d="M636.0 476V633.1" stroke="#e3e3e3" stroke-width="1"/><path d="M647.7 476V633.1" stroke="#e3e3e3" stroke-width="1"/><path d="M659.3 476V633.1" stroke="#e3e3e3" stroke-width="1"/><path d="M671.0 476V633.1" stroke="#e3e3e3" stroke-width="1"/><path d="M682.7 476V633.1" stroke="#e3e3e3" stroke-width="1"/><path d="M694.3 476V633.1" stroke="#e3e3e3" stroke-width="1"/><path d="M706.0 476V633.1" stroke="#e3e3e3" stroke-width="1"/><path d="M717.7 476V633.1" stroke="#e3e3e3" stroke-width="1"/><path d="M729.3 476V633.1" stroke="#e3e3e3" stroke-width="1"/><path d="M741.0 476V633.1" stroke="#e3e3e3" stroke-width="1"/><path d="M752.7 476V633.1" stroke="#e3e3e3" stroke-width="1"/><path d="M764.3 476V633.1" stroke="#e3e3e3" stroke-width="1"/><path d="M776.0 476V633.1" stroke="#e3e3e3" stroke-width="1"/><path d="M787.7 476V633.1" stroke="#e3e3e3" stroke-width="1"/><path d="M799.3 476V633.1" stroke="#e3e3e3" stroke-width="1"/><path d="M811.0 476V633.1" stroke="#e3e3e3" stroke-width="1"/><path d="M822.7 476V633.1" stroke="#e3e3e3" stroke-width="1"/><path d="M834.3 476V633.1" stroke="#e3e3e3" stroke-width="1"/><path d="M846.0 476V633.1" stroke="#e3e3e3" stroke-width="1"/><path d="M857.7 476V633.1" stroke="#e3e3e3" stroke-width="1"/><path d="M869.3 476V633.1" stroke="#e3e3e3" stroke-width="1"/><path d="M881.0 476V633.1" stroke="#e3e3e3" stroke-width="1"/><path d="M892.7 476V633.1" stroke="#e3e3e3" stroke-width="1"/><path d="M904.3 476V633.1" stroke="#e3e3e3" stroke-width="1"/><path d="M916.0 476V633.1" stroke="#e3e3e3" stroke-width="1"/><path d="M927.7 476V633.1" stroke="#e3e3e3" stroke-width="1"/><path d="M939.3 476V633.1" stroke="#e3e3e3" stroke-width="1"/><path d="M951.0 476V633.1" stroke="#e3e3e3" stroke-width="1"/><path d="M962.7 476V633.1" stroke="#e3e3e3" stroke-width="1"/><path d="M974.4 476V633.1" stroke="#e3e3e3" stroke-width="1"/><path d="M986.0 476V633.1" stroke="#e3e3e3" stroke-width="1"/><path d="M997.7 476V633.1" stroke="#e3e3e3" stroke-width="1"/><path d="M1009.4 476V633.1" stroke="#e3e3e3" stroke-width="1"/><path d="M1021.0 476V633.1" stroke="#e3e3e3" stroke-width="1"/><path d="M1032.7 476V633.1" stroke="#e3e3e3" stroke-width="1"/><path d="M1044.4 476V633.1" stroke="#e3e3e3" stroke-width="1"/><path d="M1056.0 476V633.1" stroke="#e3e3e3" stroke-width="1"/><path d="M1067.7 476V633.1" stroke="#e3e3e3" stroke-width="1"/><path d="M1079.4 476V633.1" stroke="#e3e3e3" stroke-width="1"/><path d="M1091.0 476V633.1" stroke="#e3e3e3" stroke-width="1"/><path d="M1102.7 476V633.1" stroke="#e3e3e3" stroke-width="1"/><path d="M1114.4 476V633.1" stroke="#e3e3e3" stroke-width="1"/><path d="M1126.0 476V633.1" stroke="#e3e3e3" stroke-width="1"/><path d="M1137.7 476V633.1" stroke="#e3e3e3" stroke-width="1"/><path d="M1149.4 476V633.1" stroke="#e3e3e3" stroke-width="1"/><path d="M1161.0 476V633.1" stroke="#e3e3e3" stroke-width="1"/><path d="M1172.7 476V633.1" stroke="#e3e3e3" stroke-width="1"/><path d="M1184.4 476V633.1" stroke="#e3e3e3" stroke-width="1"/><path d="M1196.0 476V633.1" stroke="#e3e3e3" stroke-width="1"/><path d="M391.0 633.1 L391.00 607.63 L402.67 607.99 L414.33 609.41 L426.00 607.27 L437.67 607.63 L449.33 608.52 L461.00 609.77 L472.67 607.09 L484.34 604.42 L496.00 604.42 L507.67 607.63 L519.34 610.30 L531.00 609.06 L542.67 607.63 L554.34 607.99 L566.00 609.06 L577.67 609.41 L589.34 608.52 L601.01 607.99 L612.67 607.27 L624.34 605.85 L636.01 607.09 L647.67 606.74 L659.34 607.27 L671.01 606.20 L682.67 608.16 L694.34 609.06 L706.01 607.99 L717.68 607.27 L729.34 607.63 L741.01 604.60 L752.68 601.75 L764.34 579.56 L776.01 608.16 L787.68 610.30 L799.35 609.41 L811.01 608.88 L822.68 607.27 L834.35 608.52 L846.01 609.77 L857.68 609.95 L869.35 607.27 L881.01 604.96 L892.68 607.27 L904.35 605.85 L916.01 604.96 L927.68 604.96 L939.35 604.60 L951.02 606.38 L962.68 606.74 L974.35 606.74 L986.02 605.85 L997.68 618.32 L1009.35 600.86 L1021.02 603.71 L1032.68 596.40 L1044.35 606.74 L1056.02 606.74 L1067.69 607.09 L1079.35 607.09 L1091.02 604.42 L1102.69 604.42 L1114.35 607.09 L1126.02 607.09 L1137.69 606.38 L1149.36 603.17 L1161.02 603.71 L1172.69 604.60 L1184.36 607.09 L1196.02 605.85 L1196.02 633.1Z" fill="#94ae0a" fill-opacity="0.6"/><path d="M391.00 607.63 L402.67 607.99 L414.33 609.41 L426.00 607.27 L437.67 607.63 L449.33 608.52 L461.00 609.77 L472.67 607.09 L484.34 604.42 L496.00 604.42 L507.67 607.63 L519.34 610.30 L531.00 609.06 L542.67 607.63 L554.34 607.99 L566.00 609.06 L577.67 609.41 L589.34 608.52 L601.01 607.99 L612.67 607.27 L624.34 605.85 L636.01 607.09 L647.67 606.74 L659.34 607.27 L671.01 606.20 L682.67 608.16 L694.34 609.06 L706.01 607.99 L717.68 607.27 L729.34 607.63 L741.01 604.60 L752.68 601.75 L764.34 579.56 L776.01 608.16 L787.68 610.30 L799.35 609.41 L811.01 608.88 L822.68 607.27 L834.35 608.52 L846.01 609.77 L857.68 609.95 L869.35 607.27 L881.01 604.96 L892.68 607.27 L904.35 605.85 L916.01 604.96 L927.68 604.96 L939.35 604.60 L951.02 606.38 L962.68 606.74 L974.35 606.74 L986.02 605.85 L997.68 618.32 L1009.35 600.86 L1021.02 603.71 L1032.68 596.40 L1044.35 606.74 L1056.02 606.74 L1067.69 607.09 L1079.35 607.09 L1091.02 604.42 L1102.69 604.42 L1114.35 607.09 L1126.02 607.09 L1137.69 606.38 L1149.36 603.17 L1161.02 603.71 L1172.69 604.60 L1184.36 607.09 L1196.02 605.85" fill="none" stroke="#82983a" stroke-width="1.2" stroke-opacity="0.9"/><path d="M391.0 633.1 L391.00 630.75 L402.67 630.75 L414.33 630.75 L426.00 630.75 L437.67 630.75 L449.33 630.75 L461.00 630.75 L472.67 628.70 L484.34 630.75 L496.00 630.75 L507.67 630.75 L519.34 630.75 L531.00 630.75 L542.67 630.75 L554.34 630.75 L566.00 630.75 L577.67 630.75 L589.34 630.75 L601.01 630.75 L612.67 630.75 L624.34 630.75 L636.01 630.75 L647.67 630.75 L659.34 630.75 L671.01 629.65 L682.67 630.75 L694.34 630.75 L706.01 630.75 L717.68 630.75 L729.34 629.49 L741.01 630.75 L752.68 631.53 L764.34 501.38 L776.01 631.53 L787.68 630.75 L799.35 630.75 L811.01 630.75 L822.68 630.75 L834.35 629.18 L846.01 630.75 L857.68 630.75 L869.35 630.75 L881.01 630.75 L892.68 629.96 L904.35 630.75 L916.01 629.96 L927.68 630.75 L939.35 630.75 L951.02 630.75 L962.68 630.75 L974.35 630.75 L986.02 630.75 L997.68 632.32 L1009.35 629.96 L1021.02 631.22 L1032.68 627.76 L1044.35 626.35 L1056.02 631.53 L1067.69 630.75 L1079.35 630.75 L1091.02 630.75 L1102.69 630.75 L1114.35 630.75 L1126.02 630.27 L1137.69 630.75 L1149.36 630.75 L1161.02 630.75 L1172.69 630.75 L1184.36 630.75 L1196.02 630.75 L1196.02 633.1Z" fill="#115fa6" fill-opacity="0.6"/><path d="M391.00 630.75 L402.67 630.75 L414.33 630.75 L426.00 630.75 L437.67 630.75 L449.33 630.75 L461.00 630.75 L472.67 628.70 L484.34 630.75 L496.00 630.75 L507.67 630.75 L519.34 630.75 L531.00 630.75 L542.67 630.75 L554.34 630.75 L566.00 630.75 L577.67 630.75 L589.34 630.75 L601.01 630.75 L612.67 630.75 L624.34 630.75 L636.01 630.75 L647.67 630.75 L659.34 630.75 L671.01 629.65 L682.67 630.75 L694.34 630.75 L706.01 630.75 L717.68 630.75 L729.34 629.49 L741.01 630.75 L752.68 631.53 L764.34 501.38 L776.01 631.53 L787.68 630.75 L799.35 630.75 L811.01 630.75 L822.68 630.75 L834.35 629.18 L846.01 630.75 L857.68 630.75 L869.35 630.75 L881.01 630.75 L892.68 629.96 L904.35 630.75 L916.01 629.96 L927.68 630.75 L939.35 630.75 L951.02 630.75 L962.68 630.75 L974.35 630.75 L986.02 630.75 L997.68 632.32 L1009.35 629.96 L1021.02 631.22 L1032.68 627.76 L1044.35 626.35 L1056.02 631.53 L1067.69 630.75 L1079.35 630.75 L1091.02 630.75 L1102.69 630.75 L1114.35 630.75 L1126.02 630.27 L1137.69 630.75 L1149.36 630.75 L1161.02 630.75 L1172.69 630.75 L1184.36 630.75 L1196.02 630.75" fill="none" stroke="#1d5a8a" stroke-width="1.2" stroke-opacity="0.75"/><path d="M391.0 476V633.6H1196" fill="none" stroke="#333" stroke-width="1.3"/><path d="M386 633.1H391.0" stroke="#333" stroke-width="1.2"/><path d="M386 601.7H391.0" stroke="#333" stroke-width="1.2"/><path d="M386 570.3H391.0" stroke="#333" stroke-width="1.2"/><path d="M386 538.9H391.0" stroke="#333" stroke-width="1.2"/><path d="M386 507.5H391.0" stroke="#333" stroke-width="1.2"/><path d="M386 476.1H391.0" stroke="#333" stroke-width="1.2"/><path d="M391.0 633.1V638.1" stroke="#222" stroke-width="1.2"/><path d="M402.7 633.1V638.1" stroke="#222" stroke-width="1.2"/><path d="M414.3 633.1V638.1" stroke="#222" stroke-width="1.2"/><path d="M426.0 633.1V638.1" stroke="#222" stroke-width="1.2"/><path d="M437.7 633.1V638.1" stroke="#222" stroke-width="1.2"/><path d="M449.3 633.1V638.1" stroke="#222" stroke-width="1.2"/><path d="M461.0 633.1V638.1" stroke="#222" stroke-width="1.2"/><path d="M472.7 633.1V638.1" stroke="#222" stroke-width="1.2"/><path d="M484.3 633.1V638.1" stroke="#222" stroke-width="1.2"/><path d="M496.0 633.1V638.1" stroke="#222" stroke-width="1.2"/><path d="M507.7 633.1V638.1" stroke="#222" stroke-width="1.2"/><path d="M519.3 633.1V638.1" stroke="#222" stroke-width="1.2"/><path d="M531.0 633.1V638.1" stroke="#222" stroke-width="1.2"/><path d="M542.7 633.1V638.1" stroke="#222" stroke-width="1.2"/><path d="M554.3 633.1V638.1" stroke="#222" stroke-width="1.2"/><path d="M566.0 633.1V638.1" stroke="#222" stroke-width="1.2"/><path d="M577.7 633.1V638.1" stroke="#222" stroke-width="1.2"/><path d="M589.3 633.1V638.1" stroke="#222" stroke-width="1.2"/><path d="M601.0 633.1V638.1" stroke="#222" stroke-width="1.2"/><path d="M612.7 633.1V638.1" stroke="#222" stroke-width="1.2"/><path d="M624.3 633.1V638.1" stroke="#222" stroke-width="1.2"/><path d="M636.0 633.1V638.1" stroke="#222" stroke-width="1.2"/><path d="M647.7 633.1V638.1" stroke="#222" stroke-width="1.2"/><path d="M659.3 633.1V638.1" stroke="#222" stroke-width="1.2"/><path d="M671.0 633.1V638.1" stroke="#222" stroke-width="1.2"/><path d="M682.7 633.1V638.1" stroke="#222" stroke-width="1.2"/><path d="M694.3 633.1V638.1" stroke="#222" stroke-width="1.2"/><path d="M706.0 633.1V638.1" stroke="#222" stroke-width="1.2"/><path d="M717.7 633.1V638.1" stroke="#222" stroke-width="1.2"/><path d="M729.3 633.1V638.1" stroke="#222" stroke-width="1.2"/><path d="M741.0 633.1V638.1" stroke="#222" stroke-width="1.2"/><path d="M752.7 633.1V638.1" stroke="#222" stroke-width="1.2"/><path d="M764.3 633.1V638.1" stroke="#222" stroke-width="1.2"/><path d="M776.0 633.1V638.1" stroke="#222" stroke-width="1.2"/><path d="M787.7 633.1V638.1" stroke="#222" stroke-width="1.2"/><path d="M799.3 633.1V638.1" stroke="#222" stroke-width="1.2"/><path d="M811.0 633.1V638.1" stroke="#222" stroke-width="1.2"/><path d="M822.7 633.1V638.1" stroke="#222" stroke-width="1.2"/><path d="M834.3 633.1V638.1" stroke="#222" stroke-width="1.2"/><path d="M846.0 633.1V638.1" stroke="#222" stroke-width="1.2"/><path d="M857.7 633.1V638.1" stroke="#222" stroke-width="1.2"/><path d="M869.3 633.1V638.1" stroke="#222" stroke-width="1.2"/><path d="M881.0 633.1V638.1" stroke="#222" stroke-width="1.2"/><path d="M892.7 633.1V638.1" stroke="#222" stroke-width="1.2"/><path d="M904.3 633.1V638.1" stroke="#222" stroke-width="1.2"/><path d="M916.0 633.1V638.1" stroke="#222" stroke-width="1.2"/><path d="M927.7 633.1V638.1" stroke="#222" stroke-width="1.2"/><path d="M939.3 633.1V638.1" stroke="#222" stroke-width="1.2"/><path d="M951.0 633.1V638.1" stroke="#222" stroke-width="1.2"/><path d="M962.7 633.1V638.1" stroke="#222" stroke-width="1.2"/><path d="M974.4 633.1V638.1" stroke="#222" stroke-width="1.2"/><path d="M986.0 633.1V638.1" stroke="#222" stroke-width="1.2"/><path d="M997.7 633.1V638.1" stroke="#222" stroke-width="1.2"/><path d="M1009.4 633.1V638.1" stroke="#222" stroke-width="1.2"/><path d="M1021.0 633.1V638.1" stroke="#222" stroke-width="1.2"/><path d="M1032.7 633.1V638.1" stroke="#222" stroke-width="1.2"/><path d="M1044.4 633.1V638.1" stroke="#222" stroke-width="1.2"/><path d="M1056.0 633.1V638.1" stroke="#222" stroke-width="1.2"/><path d="M1067.7 633.1V638.1" stroke="#222" stroke-width="1.2"/><path d="M1079.4 633.1V638.1" stroke="#222" stroke-width="1.2"/><path d="M1091.0 633.1V638.1" stroke="#222" stroke-width="1.2"/><path d="M1102.7 633.1V638.1" stroke="#222" stroke-width="1.2"/><path d="M1114.4 633.1V638.1" stroke="#222" stroke-width="1.2"/><path d="M1126.0 633.1V638.1" stroke="#222" stroke-width="1.2"/><path d="M1137.7 633.1V638.1" stroke="#222" stroke-width="1.2"/><path d="M1149.4 633.1V638.1" stroke="#222" stroke-width="1.2"/><path d="M1161.0 633.1V638.1" stroke="#222" stroke-width="1.2"/><path d="M1172.7 633.1V638.1" stroke="#222" stroke-width="1.2"/><path d="M1184.4 633.1V638.1" stroke="#222" stroke-width="1.2"/><path d="M1196.0 633.1V638.1" stroke="#222" stroke-width="1.2"/></svg>
<div class="t" style="left:352.8px;top:627.1px;width:40px;text-align:center;color:#222">0</div>
<div class="t" style="left:352.8px;top:595.7px;width:40px;text-align:center;color:#222">2</div>
<div class="t" style="left:352.8px;top:564.3px;width:40px;text-align:center;color:#222">4</div>
<div class="t" style="left:352.8px;top:532.9px;width:40px;text-align:center;color:#222">6</div>
<div class="t" style="left:352.8px;top:501.5px;width:40px;text-align:center;color:#222">8</div>
<div class="t" style="left:352.8px;top:470.1px;width:40px;text-align:center;color:#222">10</div>
<div class="t" style="left:352.5px;top:642.3px;width:80px;text-align:center;color:#222;line-height:14.1px">2019-07-15<br>19:27:00</div>
<div class="t" style="left:422.5px;top:642.3px;width:80px;text-align:center;color:#222;line-height:14.1px">2019-07-15<br>19:33:00</div>
<div class="t" style="left:492.5px;top:642.3px;width:80px;text-align:center;color:#222;line-height:14.1px">2019-07-15<br>19:39:00</div>
<div class="t" style="left:562.5px;top:642.3px;width:80px;text-align:center;color:#222;line-height:14.1px">2019-07-15<br>19:45:00</div>
<div class="t" style="left:632.5px;top:642.3px;width:80px;text-align:center;color:#222;line-height:14.1px">2019-07-15<br>19:51:00</div>
<div class="t" style="left:702.5px;top:642.3px;width:80px;text-align:center;color:#222;line-height:14.1px">2019-07-15<br>19:57:00</div>
<div class="t" style="left:772.5px;top:642.3px;width:80px;text-align:center;color:#222;line-height:14.1px">2019-07-15<br>20:03:00</div>
<div class="t" style="left:842.5px;top:642.3px;width:80px;text-align:center;color:#222;line-height:14.1px">2019-07-15<br>20:09:00</div>
<div class="t" style="left:912.5px;top:642.3px;width:80px;text-align:center;color:#222;line-height:14.1px">2019-07-15<br>20:15:00</div>
<div class="t" style="left:982.5px;top:642.3px;width:80px;text-align:center;color:#222;line-height:14.1px">2019-07-15<br>20:21:00</div>
<div class="t" style="left:1052.5px;top:642.3px;width:80px;text-align:center;color:#222;line-height:14.1px">2019-07-15<br>20:27:00</div>
<div class="t" style="left:1122.5px;top:642.3px;width:80px;text-align:center;color:#222;line-height:14.1px">2019-07-15<br>20:33:00</div>
<div class="a" style="left:355px;top:680px;width:849px;height:1px;background:#e0e0e0"></div>
<div class="a" style="left:688px;top:686px;width:183px;height:33px;background:#fff;border:1px solid #d8d8d8;border-radius:3px"></div>
<div class="a" style="left:788px;top:687px;width:1px;height:31px;background:#e6e6e6"></div>
<svg class="a" style="left:697px;top:697px;" width="10" height="10" viewBox="0 0 10 10"><circle cx="5" cy="5" r="4.8" fill="#94ae0a"/></svg>
<div class="t" style="left:711.5px;top:696.5px;color:#333">CPU usage</div>
<svg class="a" style="left:797px;top:697px;" width="10" height="10" viewBox="0 0 10 10"><circle cx="5" cy="5" r="4.8" fill="#115fa6"/></svg>
<div class="t" style="left:811.5px;top:696.5px;color:#333">IO delay</div>
<div class="a" style="left:0;top:0;width:1234px;height:784px;overflow:hidden">
<div class="t" style="left:384px;top:777.5px;color:#222">0.6</div>
<div class="a" style="left:407px;top:782.3px;width:5px;height:1.2px;background:#333"></div>
</div>
<div class="a" style="left:1215px;top:112px;width:14px;height:672px;background:#f0f0f0"></div>
<div class="a" style="left:1217px;top:126px;width:10px;height:280px;background:#c1c1c1"></div>
<svg class="a" style="left:1217px;top:116px;" width="10" height="6" viewBox="0 0 10 6"><path d="M1 5.5L5 1L9 5.5Z" fill="#999"/></svg>
<svg class="a" style="left:1217px;top:773px;" width="10" height="6" viewBox="0 0 10 6"><path d="M1 0.5L5 5L9 0.5Z" fill="#444"/></svg>
<div class="a" style="left:594px;top:784px;width:46px;height:6px;background:#dedede;border:1px solid #ececec;border-bottom:none"></div>
<svg class="a" style="left:612.5px;top:785px;" width="10" height="4" viewBox="0 0 10 4"><path d="M0.5 0.5L5 3.5L9.5 0.5" fill="none" stroke="#aaa" stroke-width="1.2"/></svg>
<div class="a" style="left:5px;top:789px;width:1223px;height:192px;background:#fff;border-left:1px solid #e0e0e0"></div>
<div class="a" style="left:5px;top:789px;width:1223px;height:35px;background:#f5f5f5"></div>
<div class="a" style="left:5px;top:824px;width:1223px;height:1px;background:#d4d4d4"></div>
<div class="a" style="left:15px;top:795px;width:51px;height:23px;background:#3892d4;border:1px solid #2f82c4;border-radius:3px"></div>
<div class="t" style="left:25px;top:801px;color:#fff">Tasks</div>
<div class="t" style="left:84px;top:801px;">Cluster log</div>
<div class="a" style="left:6px;top:825px;width:143.5px;height:28px;background:#edf4fb"></div>
<div class="a" style="left:149px;top:825px;width:1px;height:28px;background:#d0d0d0"></div>
<div class="a" style="left:294px;top:825px;width:1px;height:28px;background:#d0d0d0"></div>
<div class="a" style="left:390px;top:825px;width:1px;height:28px;background:#d0d0d0"></div>
<div class="a" style="left:535px;top:825px;width:1px;height:28px;background:#d0d0d0"></div>
<div class="a" style="left:1020px;top:825px;width:1px;height:28px;background:#d0d0d0"></div>
<div class="a" style="left:1213px;top:825px;width:1px;height:28px;background:#d0d0d0"></div>
<div class="a" style="left:6px;top:853px;width:1208px;height:1px;background:#d0d0d0"></div>
<div class="t" style="left:15.5px;top:833.5px;color:#666">Start Time</div>
<div class="t" style="left:160.5px;top:833.5px;color:#666">End Time</div>
<div class="t" style="left:305px;top:833.5px;color:#666">Node</div>
<div class="t" style="left:401.5px;top:833.5px;color:#666">User name</div>
<div class="t" style="left:546px;top:833.5px;color:#666">Description</div>
<div class="t" style="left:1030.5px;top:833.5px;color:#666">Status</div>
<svg class="a" style="left:75.5px;top:831px;" width="10" height="15" viewBox="0 0 10 15"><path d="M5 1V13.5M0.8 9.6L5 13.8L9.2 9.6" fill="none" stroke="#8a8a8a" stroke-width="1"/></svg>
<div class="a" style="left:6px;top:878.1px;width:1208px;height:24px;background:#fafafa"></div>
<div class="a" style="left:6px;top:926.3px;width:1208px;height:24px;background:#fafafa"></div>
<div class="a" style="left:6px;top:878.0px;width:1208px;height:1px;background:#dadada"></div>
<div class="a" style="left:6px;top:902.1px;width:1208px;height:1px;background:#dadada"></div>
<div class="a" style="left:6px;top:926.2px;width:1208px;height:1px;background:#dadada"></div>
<div class="a" style="left:6px;top:950.3px;width:1208px;height:1px;background:#dadada"></div>
<div class="a" style="left:6px;top:974.4px;width:1208px;height:1px;background:#dadada"></div>
<div class="t" style="left:15.5px;top:861.2px;">Jul 15 20:35:56</div>
<div class="t" style="left:160.5px;top:861.2px;">Jul 15 20:35:57</div>
<div class="t" style="left:305px;top:861.2px;">prod1</div>
<div class="t" style="left:401.5px;top:861.2px;">admin@pve</div>
<div class="t" style="left:546px;top:861.2px;">VM 9000 - Destroy</div>
<div class="t" style="left:1030.5px;top:861.2px;">OK</div>
<div class="t" style="left:15.5px;top:885.3px;">Jul 15 20:35:53</div>
<div class="t" style="left:160.5px;top:885.3px;">Jul 15 20:35:53</div>
<div class="t" style="left:305px;top:885.3px;">prod1</div>
<div class="t" style="left:401.5px;top:885.3px;">admin@pve</div>
<div class="t" style="left:546px;top:885.3px;">VM 9000 - Create</div>
<div class="t" style="left:1030.5px;top:885.3px;">OK</div>
<div class="t" style="left:15.5px;top:909.4px;">Jul 15 20:19:51</div>
<div class="t" style="left:160.5px;top:909.4px;">Jul 15 20:19:51</div>
<div class="t" style="left:305px;top:909.4px;">prod1</div>
<div class="t" style="left:401.5px;top:909.4px;">admin@pve</div>
<div class="t" style="left:546px;top:909.4px;">VM 99999 - Destroy</div>
<div class="t" style="left:1030.5px;top:909.4px;">OK</div>
<div class="t" style="left:15.5px;top:933.5px;">Jul 15 20:19:45</div>
<div class="t" style="left:160.5px;top:933.5px;">Jul 15 20:19:45</div>
<div class="t" style="left:305px;top:933.5px;">prod1</div>
<div class="t" style="left:401.5px;top:933.5px;">admin@pve</div>
<div class="t" style="left:546px;top:933.5px;">VM 99999 - Create</div>
<div class="t" style="left:1030.5px;top:933.5px;">OK</div>
<div class="t" style="left:15.5px;top:957.6px;">Jul 15 20:19:02</div>
<div class="t" style="left:160.5px;top:957.6px;">Jul 15 20:19:03</div>
<div class="t" style="left:305px;top:957.6px;">prod1</div>
<div class="t" style="left:401.5px;top:957.6px;">admin@pve</div>
<div class="t" style="left:546px;top:957.6px;">VM 9000 - Destroy</div>
<div class="t" style="left:1030.5px;top:957.6px;">OK</div>
<div class="a" style="left:1214px;top:854px;width:14px;height:127px;background:#f0f0f0"></div>
<div class="a" style="left:1216px;top:869px;width:10px;height:28px;background:#c1c1c1"></div>
<svg class="a" style="left:1217px;top:857px;" width="10" height="6" viewBox="0 0 10 6"><path d="M1 5.5L5 1L9 5.5Z" fill="#999"/></svg>
<svg class="a" style="left:1217px;top:971px;" width="10" height="6" viewBox="0 0 10 6"><path d="M1 0.5L5 5L9 0.5Z" fill="#444"/></svg>
</body></html>
